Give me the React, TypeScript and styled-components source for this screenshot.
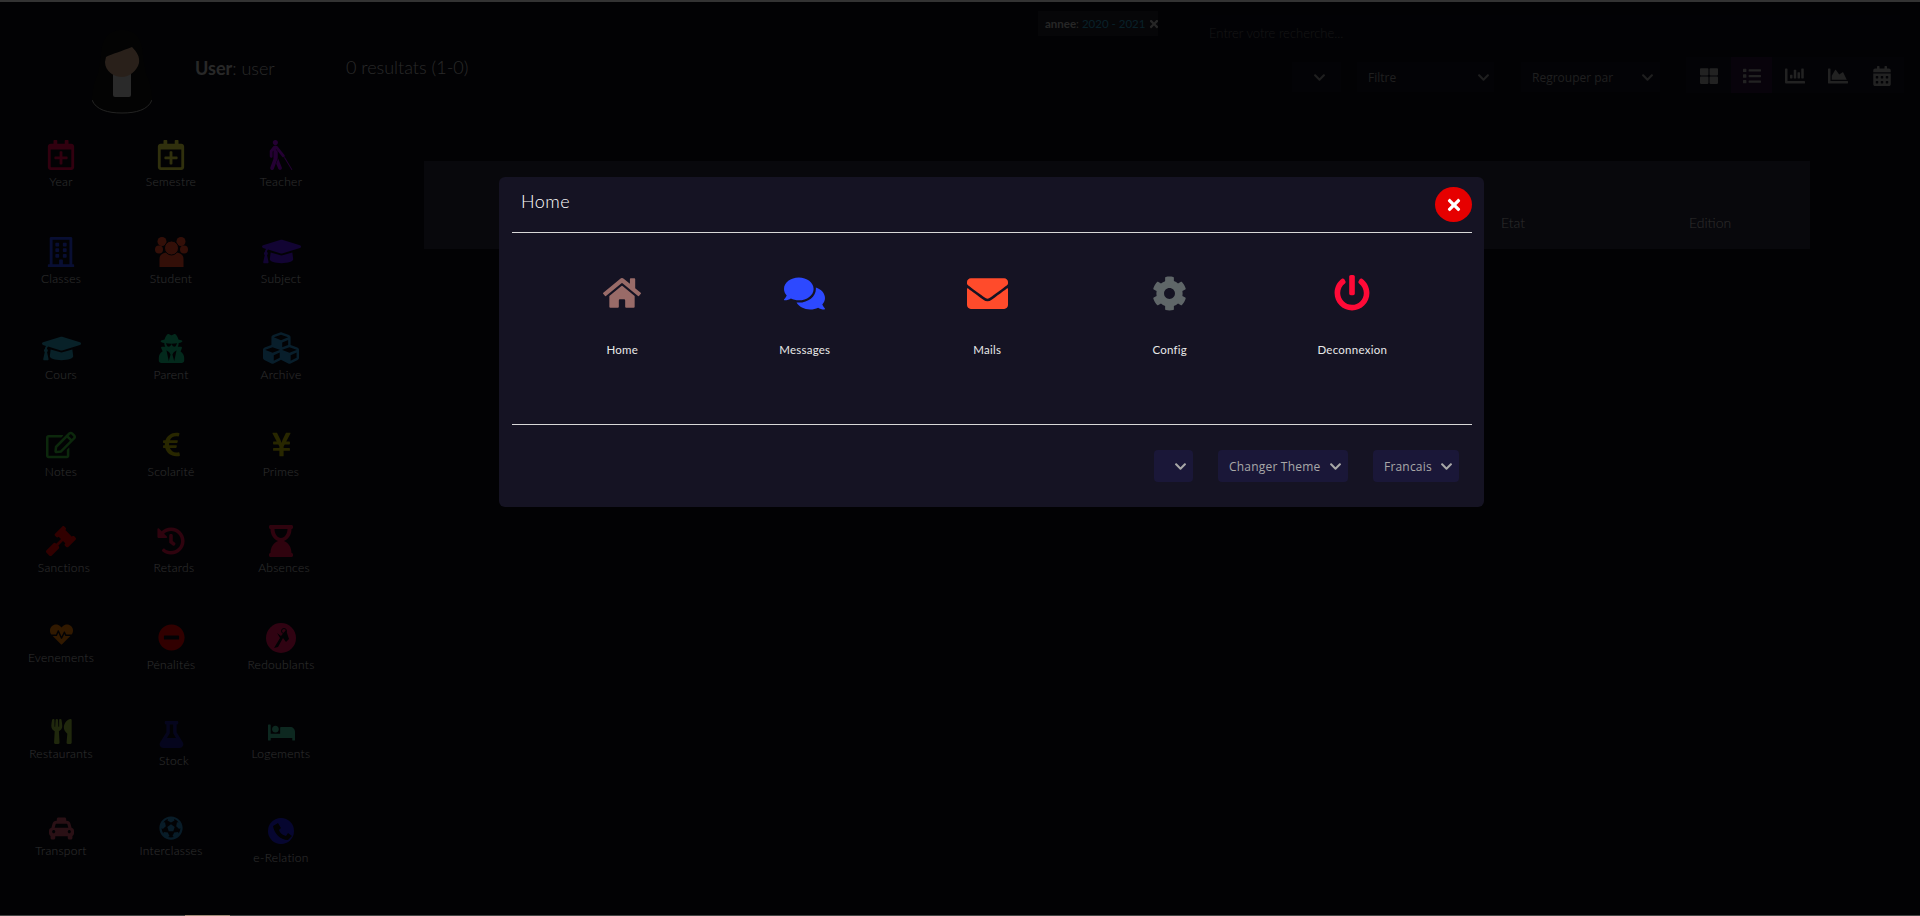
import React from 'react';
import styled, { createGlobalStyle } from 'styled-components';
import { IconType } from 'react-icons';
import {
  FaRegCalendarPlus, FaBlind, FaRegBuilding, FaGraduationCap, FaUserSecret, FaCubes,
  FaRegEdit, FaEuroSign, FaYenSign, FaGavel, FaHistory, FaHourglassEnd, FaHeartbeat, FaMinusCircle,
  FaUtensils, FaFlask, FaBed, FaTaxi, FaFutbol, FaHome, FaComments, FaEnvelope, FaCog, FaPowerOff,
  FaTimes, FaThLarge, FaList, FaChartBar, FaChartArea, FaCalendarAlt, FaChevronDown,
} from 'react-icons/fa';

const SANS = '"Lato", "Liberation Sans", sans-serif';
const SELECT_FONT = '"Open Sans", "Noto Sans", sans-serif';

const GlobalStyle = createGlobalStyle`
  html, body { margin: 0; padding: 0; height: 100%; overflow: hidden; background: #000; }
  * { box-sizing: border-box; }
  body { font-family: ${SANS}; }
`;

// drawn by hand, the packages don't have these three
const StudentIcon = () => (
  <svg width="33" height="30" viewBox="0 0 33 30">
    <g fill="currentColor">
      <circle cx="7" cy="4.5" r="4.5" />
      <circle cx="26" cy="4.5" r="4.5" />
      <circle cx="4" cy="12.5" r="4" />
      <circle cx="29" cy="12.5" r="4" />
      <path d="M4.5 30 V22 C4.5 17 9 15 16.5 15 C24 15 28.5 17 28.5 22 V30 Z" />
      <circle cx="16.5" cy="11" r="7" stroke="#0a0a14" strokeWidth="1" />
    </g>
  </svg>
);

const RedoublantIcon = ({ size }: { size?: number }) => (
  <svg width={size} height={size} viewBox="0 0 30 30">
    <circle cx="15" cy="15" r="15" fill="currentColor" />
    <path d="M8 25 L14 15 L11 10 L15 13 L20 7 L23 16 L20 19 L17 15 L12 24 Z" fill="#0a0a14" />
    <circle cx="18" cy="8" r="2.5" fill="none" stroke="#0a0a14" strokeWidth="1" />
  </svg>
);

const RelationIcon = ({ size }: { size?: number }) => (
  <svg width={size} height={size} viewBox="0 0 26 26">
    <circle cx="13" cy="13" r="13" fill="currentColor" />
    <path d="M5 8 L10 5 L13 10 L11 12 C12 15 14 17 18 18 L20 15 L24 18 L20 22 C12 22 6 15 5 8 Z" fill="#0a0a14" />
  </svg>
);

type NavItem = { label: string; icon: React.ComponentType<{ size?: number }>; color: string; size?: number; short?: boolean; shift?: boolean };

const NAV: NavItem[] = [
  { label: 'Year', icon: FaRegCalendarPlus, color: '#f5004a' },
  { label: 'Semestre', icon: FaRegCalendarPlus, color: '#f0ee40' },
  { label: 'Teacher', icon: FaBlind, color: '#b400ff' },
  { label: 'Classes', icon: FaRegBuilding, color: '#2a45ff' },
  { label: 'Student', icon: StudentIcon, color: '#ff4b2b' },
  { label: 'Subject', icon: FaGraduationCap, color: '#5a14ff', size: 39 },
  { label: 'Cours', icon: FaGraduationCap, color: '#2ba5c8', size: 39 },
  { label: 'Parent', icon: FaUserSecret, color: '#10cc8c', size: 29 },
  { label: 'Archive', icon: FaCubes, color: '#2a96d8', size: 36 },
  { label: 'Notes', icon: FaRegEdit, color: '#3dc83d', size: 30 },
  { label: 'Scolarité', icon: FaEuroSign, color: '#c8c000', size: 27 },
  { label: 'Primes', icon: FaYenSign, color: '#c8c000', size: 27 },
  { label: 'Sanctions', icon: FaGavel, color: '#f50000', size: 30, shift: true },
  { label: 'Retards', icon: FaHistory, color: '#ea1048', size: 28, shift: true },
  { label: 'Absences', icon: FaHourglassEnd, color: '#ea1048', size: 32, shift: true },
  { label: 'Evenements', icon: FaHeartbeat, color: '#f57c00', size: 23, short: true },
  { label: 'Pénalités', icon: FaMinusCircle, color: '#f50000', size: 27 },
  { label: 'Redoublants', icon: RedoublantIcon, color: '#f0105a', size: 30 },
  { label: 'Restaurants', icon: FaUtensils, color: '#a0c840', size: 25, short: true },
  { label: 'Stock', icon: FaFlask, color: '#1c1c90', size: 27, shift: true },
  { label: 'Logements', icon: FaBed, color: '#40c8a0', size: 27, short: true },
  { label: 'Transport', icon: FaTaxi, color: '#d05068', size: 25, short: true },
  { label: 'Interclasses', icon: FaFutbol, color: '#2a8cc8', size: 24, short: true },
  { label: 'e-Relation', icon: RelationIcon, color: '#2222f0', size: 26 },
];

const rows: NavItem[][] = [];
for (let i = 0; i < NAV.length; i += 3) rows.push(NAV.slice(i, i + 3));

const HOME_ITEMS: { label: string; icon: IconType; color: string; size: number }[] = [
  { label: 'Home', icon: FaHome, color: '#996b68', size: 38 },
  { label: 'Messages', icon: FaComments, color: '#2d49ff', size: 41 },
  { label: 'Mails', icon: FaEnvelope, color: '#ff4b2b', size: 41 },
  { label: 'Config', icon: FaCog, color: '#5f6668', size: 35 },
  { label: 'Deconnexion', icon: FaPowerOff, color: '#ff0a37', size: 36 },
];

const App = () => (
  <>
    <GlobalStyle />
    <Page>
      <TopLine />
      <Columns>
        <Sidebar>
          <Profile>
            <Avatar viewBox="0 0 60 84" width="60" height="84">
              <path d="M30 0 C13 0 9 14 9 28 L6 44 C2 52 0 62 0 72 C4 80 16 84 30 84 C44 84 56 80 60 72 C60 62 58 52 54 44 L51 28 C51 14 47 0 30 0 Z" fill="#111" />
              <path d="M0 70 C4 80 16 83 30 83 C44 83 56 80 60 70" fill="none" stroke="#aaa" strokeWidth="1" />
              <rect x="21" y="40" width="18" height="27" rx="2" fill="#cfcfcf" />
              <path d="M14 27 C20 24 30 21 40 17 C45 22 48 27 47 33 C45 41 37 47 30 47 C22 47 13 41 13 32 Z" fill="#cba184" />
            </Avatar>
            <UserName><strong>User</strong>: user</UserName>
          </Profile>
          {rows.map((row) => (
            <NavRow key={row[0].label}>
              {row.map(({ label, icon: Icon, color, size, short, shift }) => (
                <NavCell key={label}>
                  <NavIcon $color={color} $short={short}>
                    <Icon size={size ?? 30} />
                  </NavIcon>
                  <NavLabel $shift={shift}>{label}</NavLabel>
                </NavCell>
              ))}
            </NavRow>
          ))}
        </Sidebar>
        <Main>
          <Header>
            <Results>0 resultats (1-0)</Results>
            <Controls>
              <SearchRow>
                <Tag>
                  <TagKey>annee</TagKey>: <TagValue>2020 - 2021</TagValue> <FaTimes size={12} />
                </Tag>
                <Search>Entrer votre recherche...</Search>
              </SearchRow>
              <ToolRow>
                <ToolSelect $width={49} $gap={16} $inset={15}>
                  <span />
                  <FaChevronDown size={13} />
                </ToolSelect>
                <ToolSelect $width={137} $gap={27} $inset={4}>
                  <span>Filtre</span>
                  <FaChevronDown size={13} />
                </ToolSelect>
                <ToolSelect $width={139} $gap={26} $inset={6}>
                  <span>Regrouper par</span>
                  <FaChevronDown size={13} />
                </ToolSelect>
                <ViewGroup>
                  <ViewButton><FaThLarge size={18} /></ViewButton>
                  <ViewButton $active><FaList size={18} /></ViewButton>
                  <ViewButton><FaChartBar size={20} /></ViewButton>
                  <ViewButton><FaChartArea size={20} /></ViewButton>
                  <ViewButton><FaCalendarAlt size={20} /></ViewButton>
                </ViewGroup>
              </ToolRow>
            </Controls>
          </Header>
          <TableHead>
            <span />
            <span>Etat</span>
            <span>Edition</span>
          </TableHead>
        </Main>
      </Columns>
      <BottomLine>
        <BottomThumb />
      </BottomLine>
    </Page>

    <Backdrop>
      <Modal>
        <ModalHeader>
          <ModalTitle>Home</ModalTitle>
          <CloseButton><FaTimes size={18} /></CloseButton>
        </ModalHeader>
        <ModalBody>
          {HOME_ITEMS.map(({ label, icon: Icon, color, size }) => (
            <HomeItem key={label}>
              <HomeIcon $color={color}><Icon size={size} /></HomeIcon>
              <HomeLabel>{label}</HomeLabel>
            </HomeItem>
          ))}
        </ModalBody>
        <ModalFooter>
          <ThemeSelect $width={39}>
            <span />
            <FaChevronDown size={13} />
          </ThemeSelect>
          <ThemeSelect $width={130}>
            <span>Changer Theme</span>
            <FaChevronDown size={13} />
          </ThemeSelect>
          <ThemeSelect $width={86}>
            <span>Francais</span>
            <FaChevronDown size={13} />
          </ThemeSelect>
        </ModalFooter>
      </Modal>
    </Backdrop>
  </>
);

export default App;

const Page = styled.div`
  display: flex;
  flex-direction: column;
  width: 1920px;
  height: 916px;
  background: #0a0a14;
  color: #bdbdbd;
  overflow: hidden;
`;

const TopLine = styled.div`
  position: relative;
  z-index: 20;
  flex: none;
  height: 2px;
  background: #333;
`;

const BottomLine = styled.div`
  position: relative;
  z-index: 20;
  flex: none;
  height: 1px;
  background: #444;
  padding-left: 185px;
`;

const BottomThumb = styled.div`
  width: 45px;
  height: 1px;
  background: #a08a78;
`;

const Columns = styled.div`
  flex: 1;
  display: flex;
  min-height: 0;
`;

const Sidebar = styled.aside`
  flex: none;
  width: 345px;
  padding-left: 5px;
`;

const Profile = styled.div`
  display: flex;
  align-items: flex-start;
  height: 118px;
  padding: 28px 0 0 87px;
`;

const Avatar = styled.svg`
  flex: none;
`;

const UserName = styled.div`
  margin: 27px 0 0 43px;
  font-size: 18px;
  font-weight: 300;
  color: #c8c8c8;

  strong {
    font-weight: 700;
  }
`;

const NavRow = styled.div`
  display: grid;
  grid-template-columns: repeat(3, 110px);
  width: 331px;
  height: 92px;
  margin-bottom: 4.5px;
  padding: 20px 0 0 1px;
  background: #0c0c17;
`;

const NavCell = styled.div`
  display: flex;
  flex-direction: column;
  align-items: center;
`;

const NavIcon = styled.div<{ $color: string; $short?: boolean }>`
  display: flex;
  align-items: ${(p) => (p.$short ? 'flex-start' : 'center')};
  justify-content: center;
  height: ${(p) => (p.$short ? 23 : 30)}px;
  color: ${(p) => p.$color};
  overflow: visible;
`;

const NavLabel = styled.div<{ $shift?: boolean }>`
  margin-top: 4px;
  padding-left: ${(p) => (p.$shift ? 6 : 0)}px;
  font-size: 12px;
  font-weight: 300;
  line-height: 16px;
  letter-spacing: 0.3px;
  color: #e0e0e0;
  white-space: nowrap;
`;

const Main = styled.main`
  flex: 1;
  min-width: 0;
  padding-right: 16px;
`;

const Header = styled.div`
  display: flex;
  justify-content: space-between;
  align-items: flex-start;
`;

const Results = styled.div`
  margin: 54px 0 0 1px;
  font-size: 18px;
  font-weight: 300;
  color: #c8c8c8;
`;

const Controls = styled.div`
  width: 866px;
`;

const SearchRow = styled.div`
  display: flex;
  align-items: flex-start;
`;

const Tag = styled.div`
  flex: none;
  width: 120px;
  height: 25px;
  margin-top: 9px;
  padding-left: 7px;
  font-size: 11.5px;
  line-height: 25px;
  white-space: pre;
  background: #1e1e28;
  color: #bdbdbd;

  svg {
    vertical-align: -2px;
  }
`;

const TagKey = styled.b`
  font-weight: 700;
`;

const TagValue = styled.span`
  color: #2aa0c8;
`;

const Search = styled.div`
  flex: none;
  width: 700px;
  height: 35px;
  margin: 13px 0 0 42px;
  padding: 10px 9px 0;
  font-size: 13px;
  font-weight: 300;
  color: #666;
  background: #0d0d1c;
`;

const ToolRow = styled.div`
  display: flex;
  align-items: flex-start;
  justify-content: flex-end;
  margin-top: 7px;
`;

const ToolSelect = styled.div<{ $width: number; $gap: number; $inset: number }>`
  flex: none;
  display: flex;
  align-items: center;
  justify-content: space-between;
  width: ${(p) => p.$width}px;
  height: 30px;
  margin: 5px ${(p) => p.$gap}px 0 0;
  padding: 0 ${(p) => p.$inset}px 0 11px;
  font-family: ${SELECT_FONT};
  font-size: 12px;
  color: #9a9a9a;
  background: #101020;
  white-space: nowrap;
`;

const ViewGroup = styled.div`
  flex: none;
  display: flex;
  justify-content: space-between;
  width: 218px;
  height: 36px;
  padding: 0 2px;
  background: #101020;
`;

const ViewButton = styled.div<{ $active?: boolean }>`
  display: flex;
  align-items: center;
  justify-content: center;
  width: 41px;
  height: 36px;
  padding-top: 2px;
  color: #a8a8a8;
  background: ${(p) => (p.$active ? '#2a0f3a' : 'transparent')};
`;

const TableHead = styled.div`
  display: grid;
  grid-template-columns: 1077px 188px 1fr;
  align-items: end;
  width: 1386px;
  height: 88px;
  margin: 68px 0 0 79px;
  padding-bottom: 18px;
  font-size: 14px;
  font-weight: 300;
  color: #d8d8d8;
  background: #28283c;
`;

const Backdrop = styled.div`
  position: fixed;
  inset: 0;
  z-index: 10;
  padding: 177px 0 0 499px;
  background: rgba(0, 0, 0, 0.8);
`;

const Modal = styled.section`
  display: flex;
  flex-direction: column;
  width: 985px;
  height: 330px;
  padding: 0 12px 0 13px;
  border-radius: 6px;
  background: #151323;
  color: #fff;
`;

const ModalHeader = styled.header`
  flex: none;
  display: flex;
  justify-content: space-between;
  align-items: flex-start;
  height: 56px;
  padding-top: 10px;
  border-bottom: 1px solid #d8d8d8;
`;

const ModalTitle = styled.h2`
  margin: 2px 0 0 9px;
  font-size: 18px;
  line-height: 24px;
  font-weight: 300;
  letter-spacing: 0.5px;
`;

const CloseButton = styled.button`
  display: flex;
  align-items: center;
  justify-content: center;
  width: 37px;
  height: 35px;
  padding: 0;
  border: 0;
  border-radius: 50%;
  background: #e60000;
  color: #fff;
`;

const ModalBody = styled.div`
  flex: none;
  display: grid;
  grid-template-columns: repeat(5, 182.5px);
  align-content: start;
  height: 192px;
  padding: 40px 0 0 19px;
  border-bottom: 1px solid #d8d8d8;
`;

const HomeItem = styled.div`
  display: flex;
  flex-direction: column;
  align-items: center;
`;

const HomeIcon = styled.div<{ $color: string }>`
  display: flex;
  align-items: center;
  justify-content: center;
  height: 40px;
  color: ${(p) => p.$color};
`;

const HomeLabel = styled.div`
  margin-top: 29px;
  font-size: 11.5px;
  font-weight: 400;
  line-height: 16px;
  letter-spacing: 0.25px;
  color: #e8e8e8;
`;

const ModalFooter = styled.footer`
  display: flex;
  justify-content: flex-end;
  gap: 25px;
  padding: 25px 13px 0 0;
`;

const ThemeSelect = styled.div<{ $width: number }>`
  flex: none;
  display: flex;
  align-items: center;
  justify-content: space-between;
  width: ${(p) => p.$width}px;
  height: 32px;
  padding: 0 6px 0 11px;
  border-radius: 4px;
  font-family: ${SELECT_FONT};
  font-size: 12px;
  letter-spacing: 0.2px;
  color: #a8a8a8;
  background: #1a1738;
  white-space: nowrap;
`;
